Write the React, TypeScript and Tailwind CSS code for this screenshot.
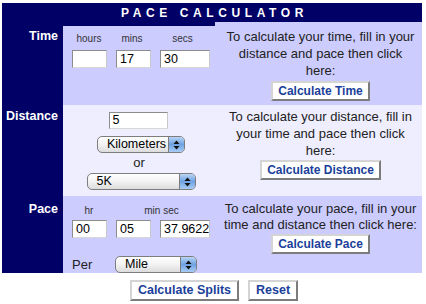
const FONT = "font-['Liberation_Sans',Arial,sans-serif]";

const Field = ({ value, width, height = "h-[18px]" }: { value: string; width: string; height?: string }) => (
  <div
    className={`${width} ${height} flex items-center overflow-hidden whitespace-nowrap border border-t-[#8c8c8c] border-l-[#8c8c8c] border-r-[#c8c8c8] border-b-[#d8d8d8] bg-white pl-[3px] text-[12.5px] text-black`}
  >
    {value}
  </div>
);

const Select = ({ value, width }: { value: string; width: string }) => (
  <div
    className={`${width} flex h-[17px] items-stretch overflow-hidden rounded-[5px] border border-[#7d7d7d] bg-gradient-to-b from-white via-[#f2f2f2] to-[#dcdcdc] text-[12.5px] text-black`}
  >
    <span className="flex flex-1 items-center pl-[9px]">{value}</span>
    <span className="flex w-[16px] items-center justify-center border-l border-[#7d7d7d] bg-gradient-to-b from-[#b9d4f4] via-[#6fa2e2] to-[#a8ccf5]">
      <svg width="7" height="10" viewBox="0 0 7 10">
        <path d="M3.5 0.5 L6.5 4 L0.5 4 Z" fill="#111" />
        <path d="M3.5 9.5 L6.5 6 L0.5 6 Z" fill="#111" />
      </svg>
    </span>
  </div>
);

const Btn = ({ label, big = false }: { label: string; big?: boolean }) => (
  <div
    className={`inline-flex items-center border-2 border-t-[#d4d4d4] border-l-[#d4d4d4] border-r-[#7c7c7c] border-b-[#7c7c7c] bg-white font-bold text-[#1b3f9a] ${
      big ? "h-[21px] px-[6px] text-[12.5px]" : "h-[20px] px-[5px] text-[12px]"
    }`}
  >
    {label}
  </div>
);

const Label = ({ text }: { text: string }) => (
  <div className="w-[61px] shrink-0 pr-[5px] text-right text-[12.5px] font-bold leading-[15px] text-white">
    {text}
  </div>
);

export default function App() {
  return (
    <div className={`${FONT} h-[304px] w-[426px] bg-white pt-[3px] pl-[2px]`}>
      <div className="w-[420px] bg-[#000066]">
        <div className="flex h-[19px] items-center justify-center pl-[5px] text-[12px] font-bold tracking-[4.6px] text-white">
          PACE CALCULATOR
        </div>

        {/* time */}
        <div className="flex h-[83px]">
          <div className="pt-[7px]">
            <Label text="Time" />
          </div>
          <div className="mt-[4px] flex w-[152px] flex-col bg-[#ccccff] pl-[9px]">
            <div className="flex gap-[9px] pt-[7px] text-[10px] leading-[12px] text-[#333]">
              <span className="w-[34px] text-center">hours</span>
              <span className="w-[34px] text-center">mins</span>
              <span className="w-[49px] text-center">secs</span>
            </div>
            <div className="mt-[5px] flex gap-[9px]">
              <Field value="" width="w-[35px]" />
              <Field value="17" width="w-[35px]" />
              <Field value="30" width="w-[50px]" />
            </div>
          </div>
          <div className="flex flex-1 flex-col items-center bg-[#ccccff] pl-[4px] pt-[6px] text-center text-[13px] leading-[17px] text-[#222]">
            <p>
              To calculate your time, fill in your
              <br />
              distance and pace then click
              <br />
              here:
            </p>
            <div className="mt-[2px]">
              <Btn label="Calculate Time" />
            </div>
          </div>
        </div>

        {/* distance */}
        <div className="flex h-[91px]">
          <div className="pt-[4px]">
            <Label text="Distance" />
          </div>
          <div className="flex w-[152px] flex-col items-center bg-[#eeeeff] pt-[7px]">
            <div className="pr-[2px]">
              <Field value="5" width="w-[59px]" height="h-[17px]" />
            </div>
            <div className="mt-[7px] pl-[4px]">
              <Select value="Kilometers" width="w-[88px]" />
            </div>
            <div className="h-[20px] text-[13px] leading-[20px] text-[#222]">or</div>
            <div className="pl-[4px]">
              <Select value="5K" width="w-[109px]" />
            </div>
          </div>
          <div className="flex flex-1 flex-col items-center bg-[#eeeeff] pl-[4px] pt-[3px] text-center text-[13px] leading-[17px] text-[#222]">
            <p>
              To calculate your distance, fill in
              <br />
              your time and pace then click
              <br />
              here:
            </p>
            <div className="mt-[1px]">
              <Btn label="Calculate Distance" />
            </div>
          </div>
        </div>

        {/* pace */}
        <div className="flex h-[77px]">
          <div className="pt-[6px]">
            <Label text="Pace" />
          </div>
          <div className="flex w-[152px] flex-col bg-[#ccccff] pl-[9px]">
            <div className="flex gap-[9px] pt-[9px] text-[10px] leading-[12px] text-[#333]">
              <span className="w-[34px] text-center">hr</span>
              <span className="w-[93px] text-center">min sec</span>
            </div>
            <div className="mt-[3px] flex gap-[9px]">
              <Field value="00" width="w-[35px]" />
              <Field value="05" width="w-[35px]" />
              <Field value="37.9622" width="w-[50px]" />
            </div>
            <div className="mt-[17px] flex items-center">
              <span className="w-[43px] text-[13px] text-[#222]">Per</span>
              <Select value="Mile" width="w-[82px]" />
            </div>
          </div>
          <div className="flex flex-1 flex-col items-center bg-[#ccccff] pl-[4px] pt-[5px] text-center text-[13px] leading-[16px] text-[#222]">
            <p>
              To calculate your pace, fill in your
              <br />
              time and distance then click here:
            </p>
            <div className="mt-[1px]">
              <Btn label="Calculate Pace" />
            </div>
          </div>
        </div>
      </div>

      <div className="mt-[7px] flex justify-center gap-[9px]">
        <Btn label="Calculate Splits" big />
        <Btn label="Reset" big />
      </div>
    </div>
  );
}
